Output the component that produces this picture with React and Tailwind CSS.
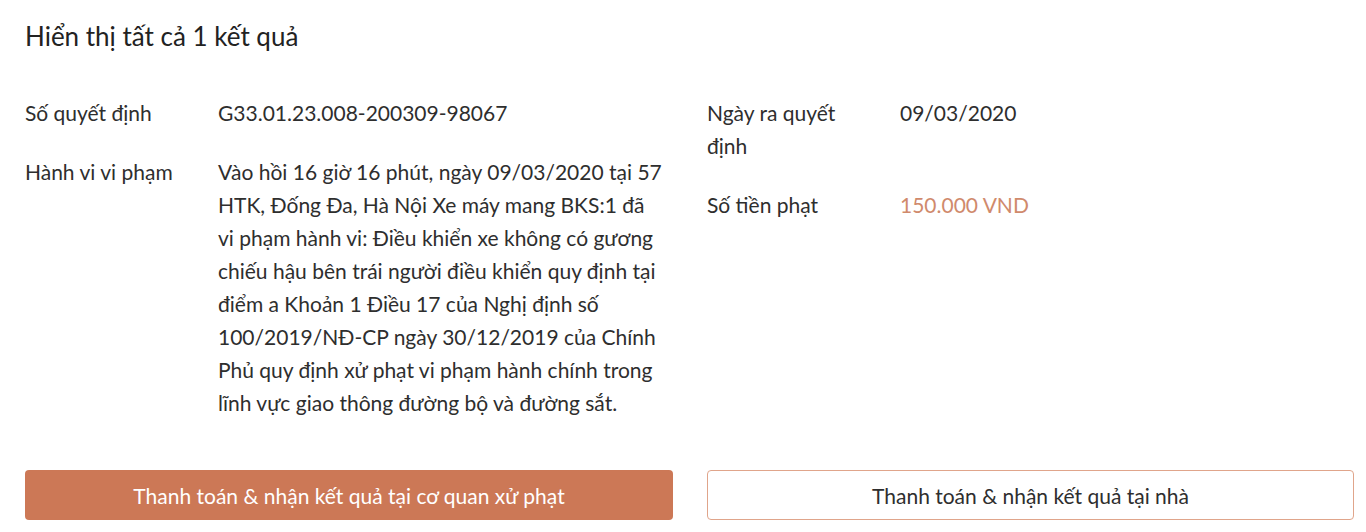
const rowsLeft = [
  { label: 'Số quyết định', value: 'G33.01.23.008-200309-98067' },
  {
    label: 'Hành vi vi phạm',
    value:
      'Vào hồi 16 giờ 16 phút, ngày 09/03/2020 tại 57 HTK, Đống Đa, Hà Nội Xe máy mang BKS:1 đã vi phạm hành vi: Điều khiển xe không có gương chiếu hậu bên trái người điều khiển quy định tại điểm a Khoản 1 Điều 17 của Nghị định số 100/2019/NĐ-CP ngày 30/12/2019 của Chính Phủ quy định xử phạt vi phạm hành chính trong lĩnh vực giao thông đường bộ và đường sắt.',
  },
]

const rowsRight = [
  { label: 'Ngày ra quyết định', value: '09/03/2020' },
  { label: 'Số tiền phạt', value: '150.000 VND', accent: true },
]

const InfoRow = ({ label, value, accent }) => (
  <div className="flex">
    <div className="w-[193px] shrink-0 pr-[40px]">{label}</div>
    <div className={`w-[444px] ${accent ? 'text-[#d08a6c]' : ''}`}>{value}</div>
  </div>
)

export default function App() {
  return (
    <div
      className="min-h-screen bg-white pl-[25px] pr-[12px] pt-[19px] text-[#2e2e2e] text-[21px] leading-[33px]"
      style={{ fontFamily: 'Lato, "Open Sans", sans-serif' }}
    >
      {/* tiêu đề */}
      <h2 className="text-[26px] leading-[34px] text-[#222222]">Hiển thị tất cả 1 kết quả</h2>

      {/* thông tin quyết định */}
      <div className="mt-[43px] grid grid-cols-[648px_647px] gap-x-[34px]">
        <div className="flex flex-col gap-[26px]">
          {rowsLeft.map((r) => (
            <InfoRow key={r.label} {...r} />
          ))}
        </div>
        <div className="flex flex-col gap-[26px]">
          {rowsRight.map((r) => (
            <InfoRow key={r.label} {...r} />
          ))}
        </div>
      </div>

      {/* nút thanh toán */}
      <div className="mt-[51px] grid grid-cols-[648px_647px] gap-x-[34px]">
        <button className="h-[50px] rounded-[4px] bg-[#cc7856] text-white text-[21px]">
          Thanh toán &amp; nhận kết quả tại cơ quan xử phạt
        </button>
        <button className="h-[50px] rounded-[4px] border border-[#e0a58b] bg-white text-[#2e2e2e] text-[21px]">
          Thanh toán &amp; nhận kết quả tại nhà
        </button>
      </div>
    </div>
  )
}
